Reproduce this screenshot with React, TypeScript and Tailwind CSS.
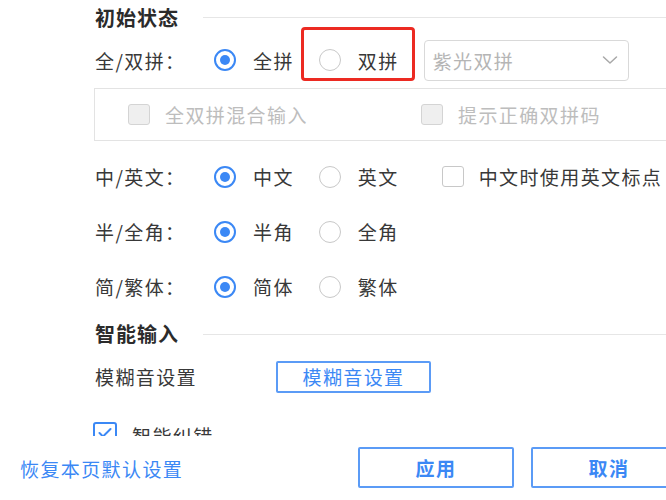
import React from "react";

/* ─── Small controls ─────────────────────────────────────────────────────── */
function Radio({ checked }: { checked?: boolean }) {
  return checked ? (
    <span className="w-[22px] h-[22px] rounded-full border-2 border-[#3b88f5] flex items-center justify-center shrink-0">
      <span className="w-[10px] h-[10px] rounded-full bg-[#3b88f5]" />
    </span>
  ) : (
    <span className="w-[22px] h-[22px] rounded-full border border-[#c8c8c8] shrink-0" />
  );
}

function Option({ checked, label, gap = "mr-[25px]" }: { checked?: boolean; label: string; gap?: string }) {
  return (
    <span className={`flex items-center ${gap}`}>
      <Radio checked={checked} />
      <span className="ml-[17px]">{label}</span>
    </span>
  );
}

function SectionTitle({ text }: { text: string }) {
  return (
    <div className="flex items-center h-full">
      <span className="font-bold text-[20px] tracking-[1px] text-[#2b2b2b]">{text}</span>
      <span className="flex-1 h-px bg-[#e6e6e6] ml-[24px]" />
    </div>
  );
}

/* ─── Page ───────────────────────────────────────────────────────────────── */
export default function App() {
  const rows = [
    { label: "中/英文：", a: "中文", b: "英文", extra: true },
    { label: "半/全角：", a: "半角", b: "全角" },
    { label: "简/繁体：", a: "简体", b: "繁体" },
  ];

  return (
    <div className="w-[666px] h-[500px] bg-white overflow-hidden text-[#383838] text-[19px] tracking-[1.4px] font-['Noto_Sans_CJK_SC','Noto_Sans',sans-serif] leading-none">
      {/* Scrollable settings area */}
      <div className="h-[436px] overflow-hidden pl-[95px]">
        <div className="h-[35px]">
          <SectionTitle text="初始状态" />
        </div>

        {/* 全/双拼 */}
        <div className="h-[50px] flex items-center">
          <span className="w-[119px]">全/双拼：</span>
          <Option checked label="全拼" />
          <span className="relative flex items-center mr-[25px]">
            <Option label="双拼" gap="" />
            <span className="absolute left-[-18px] right-[-16px] top-[-22px] bottom-[-10px] border-[3px] border-[#ec2a22] rounded-[4px]" />
          </span>
          <span className="w-[205px] h-[41px] border border-[#d9d9d9] rounded-[4px] flex items-center justify-between pl-[8px] pr-[10px] text-[#b5b5b5]">
            紫光双拼
            <svg width="16" height="10" viewBox="0 0 16 10" fill="none">
              <path d="M1.5 2l6.5 6 6.5-6" stroke="#a8a8a8" strokeWidth="1.5" strokeLinecap="round" strokeLinejoin="round" />
            </svg>
          </span>
        </div>

        {/* Disabled shuangpin options */}
        <div className="h-[53px] mt-[3px] -ml-px border border-[#e3e3e3] border-r-0 flex items-center pl-[33px] text-[#bdbdbd]">
          <span className="w-[22px] h-[21px] rounded-[3px] border border-[#d4d4d4] bg-[#efefef]" />
          <span className="ml-[15px] w-[256px]">全双拼混合输入</span>
          <span className="w-[22px] h-[21px] rounded-[3px] border border-[#d4d4d4] bg-[#efefef]" />
          <span className="ml-[15px]">提示正确双拼码</span>
        </div>

        <div className="mt-[8px]">
          {rows.map((r) => (
            <div key={r.label} className="h-[55px] flex items-center">
              <span className="w-[119px]">{r.label}</span>
              <Option checked label={r.a} />
              <Option label={r.b} gap="mr-[43px]" />
              {r.extra && (
                <span className="flex items-center whitespace-nowrap">
                  <span className="w-[22px] h-[21px] rounded-[3px] border border-[#c8c8c8] shrink-0" />
                  <span className="ml-[15px]">中文时使用英文标点</span>
                </span>
              )}
            </div>
          ))}
        </div>

        <div className="h-[40px]">
          <SectionTitle text="智能输入" />
        </div>

        <div className="h-[45px] flex items-center">
          <span className="w-[181px]">模糊音设置</span>
          <button className="w-[155px] h-[32px] border-2 border-[#5b9bf6] text-[#3b88f5] rounded-[2px] text-[19px] tracking-[1.4px]">
            模糊音设置
          </button>
        </div>

        <div className="flex items-start pt-[23px] -ml-[2px]">
          <span className="w-[24px] h-[22px] rounded-[3px] border-2 border-[#3b88f5] flex items-center justify-center">
            <svg width="14" height="12" viewBox="0 0 14 12" fill="none">
              <path d="M1.5 6l3.5 3.5 7.5-7.5" stroke="#3b88f5" strokeWidth="2" strokeLinecap="round" strokeLinejoin="round" />
            </svg>
          </span>
          <span className="ml-[15px] mt-[4px]">智能纠错</span>
        </div>
      </div>

      {/* Footer */}
      <div className="h-[64px] flex items-center pl-[20px]">
        <span className="text-[#3b88f5] w-[338px] shrink-0">恢复本页默认设置</span>
        <button className="w-[156px] h-[41px] border-2 border-[#5b9bf6] text-[#3b88f5] font-bold text-[19px] tracking-[1.4px] rounded-[2px] mt-[-2px] shrink-0">
          应用
        </button>
        <button className="w-[156px] h-[41px] border-2 border-[#5b9bf6] text-[#3b88f5] font-bold text-[19px] tracking-[1.4px] rounded-[2px] ml-[17px] mt-[-2px] shrink-0">
          取消
        </button>
      </div>
    </div>
  );
}
